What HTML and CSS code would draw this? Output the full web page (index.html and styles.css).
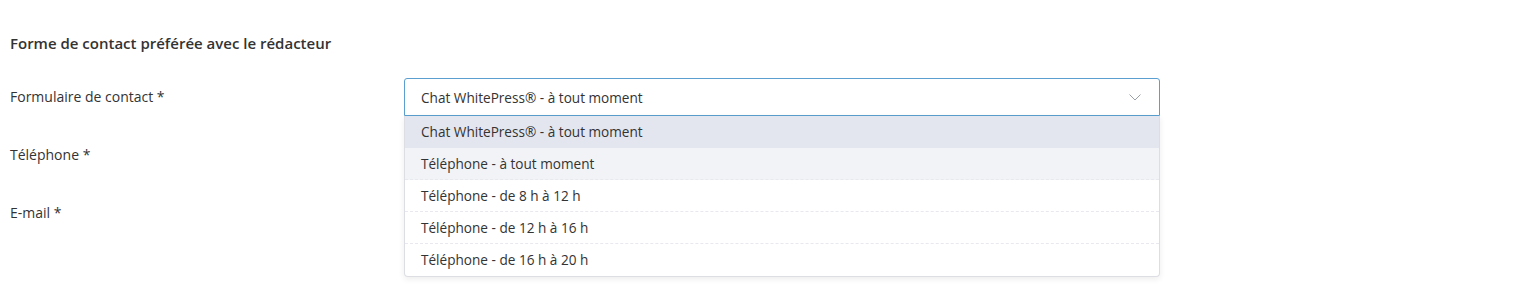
FILE: index.html
```html
<!DOCTYPE html>
<html lang="fr">
<head>
<meta charset="UTF-8">
<meta name="viewport" content="width=device-width, initial-scale=1.0">
<title>Forme de contact</title>
<link rel="stylesheet" href="styles.css">
</head>
<body>
<div class="container">
  <h2 class="section-title">Forme de contact préférée avec le rédacteur</h2>
  <form class="contact-form">
    <div class="form-row">
      <label for="contact-form">Formulaire de contact *</label>
      <div class="select-wrap">
        <div class="select open" id="contact-form">
          <span class="select-value">Chat WhitePress® - à tout moment</span>
          <svg class="chevron" width="12" height="7" viewBox="0 0 12 7">
            <path d="M0.5 0.5 L6 6 L11.5 0.5" fill="none" stroke="#9aa0a8" stroke-width="1"/>
          </svg>
        </div>
        <ul class="dropdown">
          <li class="selected">Chat WhitePress® - à tout moment</li>
          <li class="hover">Téléphone - à tout moment</li>
          <li>Téléphone - de 8 h à 12 h</li>
          <li>Téléphone - de 12 h à 16 h</li>
          <li>Téléphone - de 16 h à 20 h</li>
        </ul>
      </div>
    </div>
    <div class="form-row">
      <label for="phone">Téléphone *</label>
      <input type="text" id="phone" class="field">
    </div>
    <div class="form-row">
      <label for="email">E-mail *</label>
      <input type="text" id="email" class="field">
    </div>
  </form>
</div>
</body>
</html>
```

FILE: styles.css
```css
html, body {
  min-height: 298px;
}

body {
  margin: 0;
  font-family: "Open Sans", Arial, sans-serif;
  font-size: 14px;
  color: #333;
  background-color: #fff;
}

.container {
  padding: 33px 10px 0 10px;
}

.section-title {
  margin: 0 0 25px 0;
  font-size: 15px;
  font-weight: 600;
  line-height: 20px;
  color: #333;
}

.form-row {
  display: grid;
  grid-template-columns: 394px 756px;
  align-items: center;
  margin-bottom: 20px;
}

.form-row label {
  line-height: 18px;
}

.select-wrap {
  position: relative;
}

.select {
  display: flex;
  align-items: center;
  justify-content: space-between;
  height: 38px;
  box-sizing: border-box;
  padding: 0 16px;
  border: 1px solid #ccc;
  border-radius: 3px;
  background-color: #fff;
  font-size: 13.6px;
}

.select.open {
  border-color: #5a9fd0;
  border-radius: 3px 3px 0 0;
}

.chevron {
  margin-right: 2px;
}

.field {
  height: 38px;
  box-sizing: border-box;
  border: 1px solid #ccc;
  border-radius: 3px;
}

.dropdown {
  position: absolute;
  top: 38px;
  left: 0;
  right: 0;
  margin: 0;
  padding: 0;
  list-style: none;
  background-color: #fff;
  border: 1px solid #dcdee4;
  border-top: none;
  border-radius: 0 0 4px 4px;
  box-shadow: 0 2px 6px rgba(0, 0, 0, 0.08);
  font-size: 13.6px;
  z-index: 10;
}

.dropdown li {
  height: 32px;
  line-height: 32px;
  padding: 0 16px;
  border-bottom: 1px dashed #e8e9ee;
  box-sizing: border-box;
}

.dropdown li:last-child {
  border-bottom: none;
}

.dropdown li.selected {
  background-color: #e3e6ee;
  border-bottom-color: transparent;
}

.dropdown li.hover {
  background-color: #f2f3f7;
}
```
